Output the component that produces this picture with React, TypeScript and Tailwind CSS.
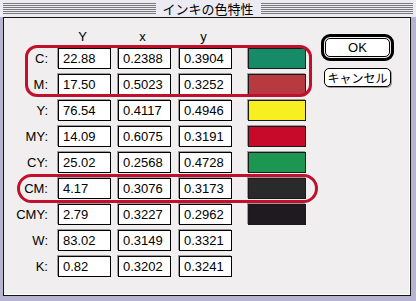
const rows = [
  { label: "C:", Y: "22.88", x: "0.2388", y: "0.3904", color: "#178a68" },
  { label: "M:", Y: "17.50", x: "0.5023", y: "0.3252", color: "#b8393f" },
  { label: "Y:", Y: "76.54", x: "0.4117", y: "0.4946", color: "#f7ef1f" },
  { label: "MY:", Y: "14.09", x: "0.6075", y: "0.3191", color: "#c70a2a" },
  { label: "CY:", Y: "25.02", x: "0.2568", y: "0.4728", color: "#1c9650" },
  { label: "CM:", Y: "4.17", x: "0.3076", y: "0.3173", color: "#2a2a2b" },
  { label: "CMY:", Y: "2.79", x: "0.3227", y: "0.2962", color: "#1e1a20" },
  { label: "W:", Y: "83.02", x: "0.3149", y: "0.3321", color: "" },
  { label: "K:", Y: "0.82", x: "0.3202", y: "0.3241", color: "" },
];

const stripes =
  "h-[11px] flex-1 bg-[repeating-linear-gradient(to_bottom,#7a7a7a_0px,#7a7a7a_1px,transparent_1px,transparent_2px)]";

function Field({ value, className }: { value: string; className: string }) {
  return (
    <div
      className={`h-[21px] w-[53px] border border-black bg-white pl-[4px] text-[13px] leading-[19px] shadow-[-1px_-1px_0_#9c9c9c] ${className}`}
    >
      {value}
    </div>
  );
}

export default function App() {
  return (
    <div className="w-[416px] h-[301px] bg-[#b7b4d2] flex flex-col text-black font-['Liberation_Sans','Noto_Sans_CJK_JP',sans-serif]">
      <div className="h-[17px] bg-[#eceaf2] flex items-center px-[3px] gap-[6px]">
        <div className={stripes} />
        <div className="text-[13px] leading-[15px] font-['Noto_Sans_CJK_JP',sans-serif] px-[1px]">インキの色特性</div>
        <div className={stripes} />
      </div>
      <div className="flex-1 pl-[3px] pr-[5px] pb-[5px] flex">
        <div className="relative flex-1 border border-[#141414] bg-[#f0eeee] flex shadow-[inset_-1px_-1px_0_#ffffff]">
          <div className="pt-[12px]">
            <div className="h-[18px] flex text-[13px] leading-[14px]">
              <div className="w-[54px]" />
              <div className="w-[53px] text-center pr-[4px]">Y</div>
              <div className="w-[53px] ml-[7px] text-center pr-[4px]">x</div>
              <div className="w-[53px] ml-[8px] text-center pr-[4px]">y</div>
            </div>
            <div className="flex flex-col gap-[5px]">
              {rows.map((r) => (
                <div key={r.label} className="flex items-center h-[21px]">
                  <div className="w-[44px] text-right text-[13px] leading-[19px]">{r.label}</div>
                  <Field value={r.Y} className="ml-[10px]" />
                  <Field value={r.x} className="ml-[7px]" />
                  <Field value={r.y} className="ml-[8px]" />
                  {r.color && (
                    <div
                      className="ml-[16px] w-[58px] h-[21px] border border-[#1a1a1a] shadow-[-1px_-1px_0_#9c9c9c]"
                      style={{ backgroundColor: r.color }}
                    />
                  )}
                </div>
              ))}
            </div>
          </div>
          <div className="ml-[15px] pt-[16px] flex flex-col">
            <div className="w-[73px] h-[27px] border-[3px] border-black rounded-[9px] p-[1px] bg-[#f0eeee]">
              <div className="h-full border border-black rounded-[5px] bg-white flex items-center justify-center text-[13px]">
                OK
              </div>
            </div>
            <div className="mt-[7px] ml-[3px] w-[67px] h-[19px] border border-black rounded-[5px] bg-white flex items-center justify-center text-[12px] leading-[14px] font-['Noto_Sans_CJK_JP',sans-serif] shadow-[1px_1px_0_#9c9c9c]">
              キャンセル
            </div>
          </div>
          <div className="absolute left-[21px] top-[27px] w-[287px] h-[52px] border-[3px] border-[#c20f2c] rounded-[12px]" />
          <div className="absolute left-[13px] top-[156px] w-[301px] h-[29px] border-[3px] border-[#c20f2c] rounded-full" />
        </div>
      </div>
    </div>
  );
}
